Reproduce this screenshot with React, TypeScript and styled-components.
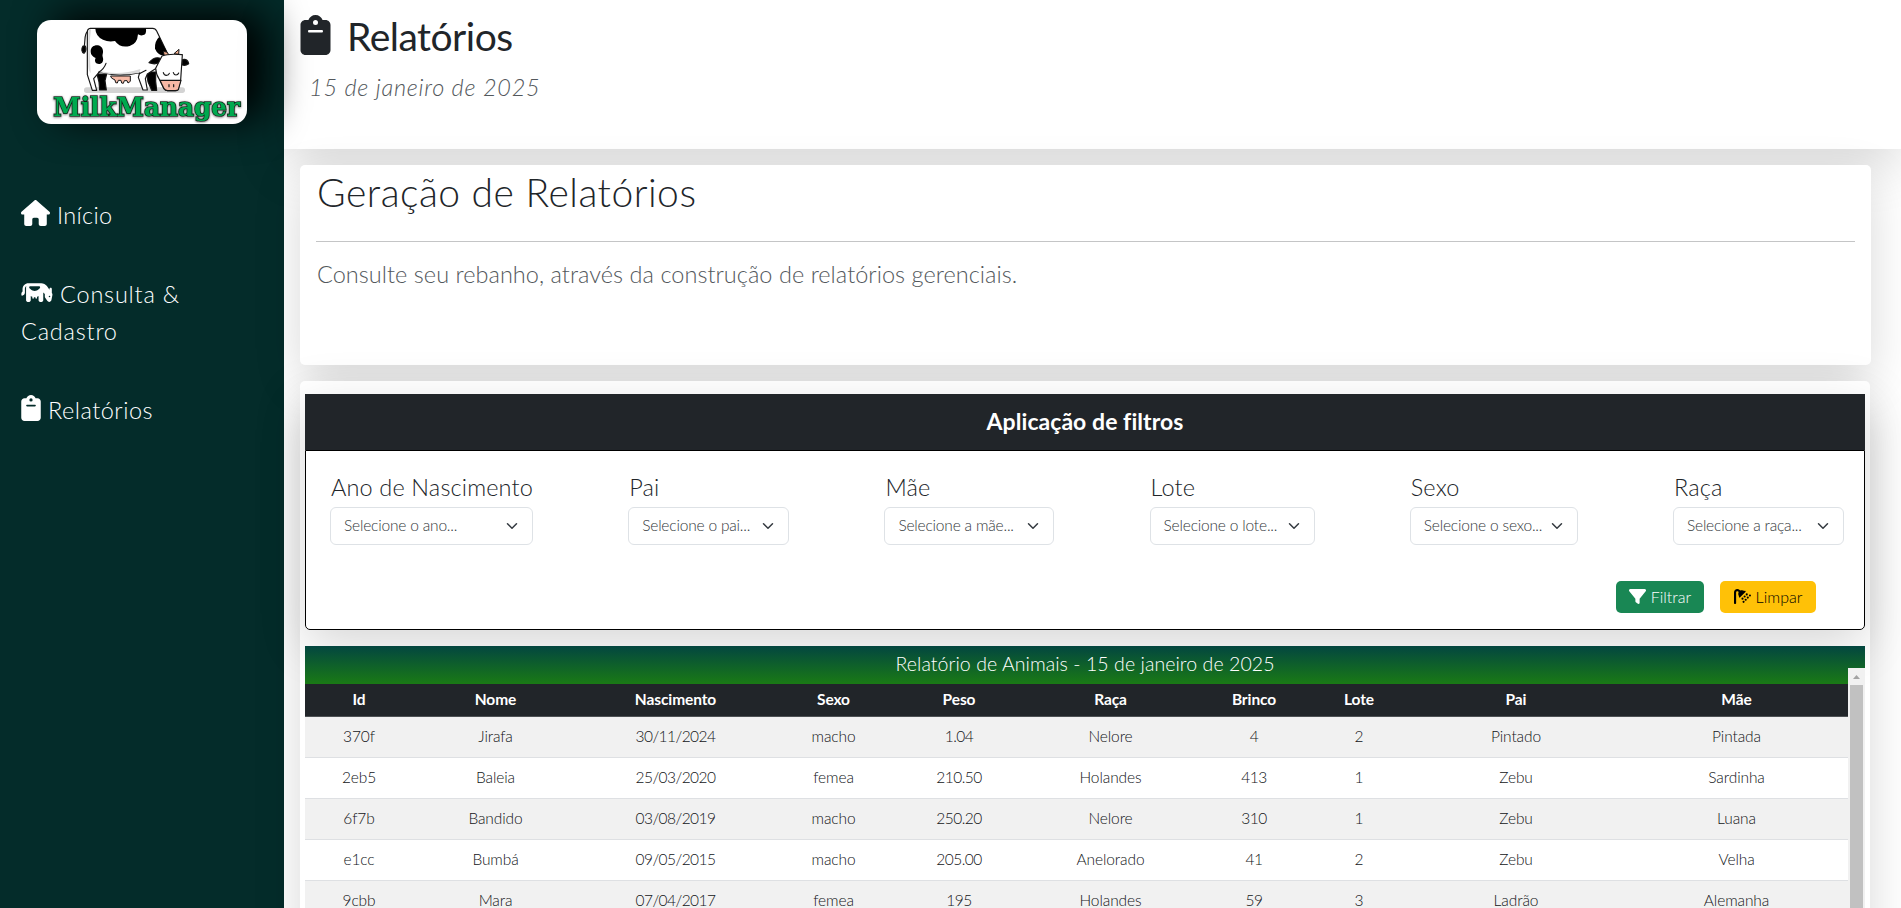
import React from "react";
import styled, { createGlobalStyle } from "styled-components";
import { FaHouse, FaCow, FaClipboard, FaFilter, FaShower } from "react-icons/fa6";

const Global = createGlobalStyle`
  *, *::before, *::after { box-sizing: border-box; }
  html, body { margin: 0; background: #fff; overflow: hidden; }
  body { font-family: Lato, "Open Sans", sans-serif; font-weight: 300; color: #212529; font-size: 16px; line-height: 24px; }
  h1, h2, p { margin: 0; font-weight: 300; }
`;

const SHADOW = "0 16px 48px rgba(0, 0, 0, 0.155)";

const Page = styled.div`
  display: flex;
  height: 908px;
  overflow: hidden;
`;
const Sidebar = styled.aside`
  display: flow-root;
  flex: 0 0 284px;
  background: #042c2a;
  color: #fff;
`;
const LogoBox = styled.div`
  width: 210px;
  height: 104px;
  margin: 20px 0 0 37px;
  border-radius: 14px;
  background: #fff;
  box-shadow: 18px -6px 40px #000;
  svg { display: block; }
`;
const Nav = styled.nav`
  display: flex;
  flex-direction: column;
  gap: 41px;
  padding: 73px 21px 0;
`;
const NavLink = styled.a<{ $ls: number; $icon: number }>`
  font-size: 23.5px;
  line-height: 37.5px;
  letter-spacing: ${(p) => p.$ls}px;
  svg { width: ${(p) => p.$icon}px; vertical-align: -2px; margin-right: 7px; }
`;
const Main = styled.main`
  flex: 1;
  min-width: 0;
`;
const Header = styled.header`
  height: 149px;
  padding: 15px 16px 0;
  box-shadow: ${SHADOW};
`;
const Heading = styled.h1`
  display: flex;
  align-items: center;
  gap: 16px;
  height: 42px;
  font-size: 39px;
  font-weight: 400;
  letter-spacing: -0.5px;
  svg { width: 31px; margin-top: -2px; }
`;
const DateLine = styled.p`
  margin: 14px 0 0 9px;
  font-size: 23.5px;
  line-height: 32px;
  font-style: italic;
  letter-spacing: 0.75px;
  color: #53585c;
`;
const Cards = styled.div`
  display: flex;
  flex-direction: column;
  gap: 16px;
  padding: 16px 31px 0 16px;
`;
const Intro = styled.section`
  height: 200px;
  margin-right: -1px;
  padding: 4px 16px 0 16px;
  border-radius: 5px;
  background: #fff;
  box-shadow: ${SHADOW};
`;
const IntroTitle = styled.h2`
  padding-left: 1px;
  font-size: 39px;
  line-height: 46px;
  letter-spacing: 0.5px;
`;
const Rule = styled.hr`
  margin: 26px 0 0;
  border: 0;
  border-top: 1px solid #c4c5c6;
`;
const IntroText = styled.p`
  margin-top: 16px;
  padding-left: 1px;
  font-size: 23.5px;
  line-height: 32px;
  letter-spacing: 0.04px;
  color: #53585c;
`;
const Report = styled.section`
  height: 640px;
  padding: 13px 5px 0;
  border-radius: 5px;
  background: #fff;
  box-shadow: ${SHADOW};
`;
const FilterPanel = styled.div`
  height: 236px;
  border-radius: 0 0 5px 5px;
  box-shadow: ${SHADOW};
`;
const FilterTitle = styled.div`
  height: 56px;
  background: #212529;
  color: #fff;
  font-size: 23px;
  font-weight: 700;
  line-height: 54px;
  text-align: center;
  letter-spacing: 0.05px;
`;
const FilterBody = styled.div`
  height: 180px;
  padding: 17px 20px 0 24px;
  border: 1px solid #000;
  border-radius: 0 0 5px 5px;
  background: #fff;
`;
const Fields = styled.div`
  display: flex;
  justify-content: space-between;
`;
const Field = styled.label<{ $w: number }>`
  display: block;
  width: ${(p) => p.$w}px;
  font-size: 23.5px;
  line-height: 38px;
  letter-spacing: 0.15px;
  text-indent: 1px;
  white-space: nowrap;
`;
const SelectBox = styled.div`
  display: flex;
  align-items: center;
  justify-content: space-between;
  height: 38px;
  margin-top: 1px;
  padding: 0 14px 2px 12px;
  border: 1px solid #dee2e6;
  border-radius: 6px;
  font-size: 15.5px;
  line-height: 24px;
  letter-spacing: -0.18px;
  color: #33373b;
  svg { position: relative; top: 1px; }
`;
const Actions = styled.div`
  display: flex;
  justify-content: flex-end;
  gap: 16px;
  margin-top: 36px;
  padding-right: 28px;
`;
const Button = styled.button<{ $bg: string; $fg: string; $w: number }>`
  display: flex;
  align-items: center;
  justify-content: center;
  gap: 5px;
  width: ${(p) => p.$w}px;
  height: 32px;
  padding: 0 0 1px;
  border: 0;
  border-radius: 5px;
  background: ${(p) => p.$bg};
  color: ${(p) => p.$fg};
  font: 300 16px Lato, sans-serif;
  letter-spacing: 0;
`;
const Listing = styled.div`
  display: grid;
  grid-template-columns: 1543px 17px;
  grid-template-rows: 38px 1fr;
  height: 360px;
  margin-top: 16px;
`;
const Caption = styled.div`
  grid-column: 1 / 3;
  background: linear-gradient(#034640, #1a7a15);
  color: #fff;
  font-size: 19.5px;
  line-height: 35px;
  text-align: center;
  letter-spacing: 0.07px;
`;
const Table = styled.table`
  align-self: start;
  width: 1543px;
  table-layout: fixed;
  border-collapse: separate;
  border-spacing: 0;
  text-align: center;
  font-size: 15.5px;
`;
const Th = styled.th<{ $w: number }>`
  width: ${(p) => p.$w}px;
  height: 33px;
  padding: 0 0 3px;
  background: #212529;
  border-bottom: 1px solid #4d5154;
  color: #fff;
  font-weight: 700;
  letter-spacing: -0.1px;
`;
const Row = styled.tr`
  &:nth-child(odd) { background: #f1f1f1; }
`;
const Td = styled.td<{ $tight: boolean }>`
  height: 41px;
  padding: 0 0 2px;
  border-bottom: 1px solid #dee0e3;
  color: #111417;
  letter-spacing: ${(p) => (p.$tight ? -0.55 : -0.1)}px;
`;
const ScrollTrack = styled.div`
  margin-top: -16px;
  padding: 6px 2px 0;
  background: #f1f1f1;
`;
const ScrollArrow = styled.svg`
  display: block;
  width: 13px;
  height: 11px;
`;
const Thumb = styled.div`
  height: 300px;
  background: #c1c1c1;
`;

const columns: [string, number][] = [
  ["Id", 108], ["Nome", 165], ["Nascimento", 195], ["Sexo", 121], ["Peso", 130],
  ["Raça", 173], ["Brinco", 114], ["Lote", 96], ["Pai", 218], ["Mãe", 223],
];
const animals = [
  ["370f", "Jirafa", "30/11/2024", "macho", "1.04", "Nelore", "4", "2", "Pintado", "Pintada"],
  ["2eb5", "Baleia", "25/03/2020", "femea", "210.50", "Holandes", "413", "1", "Zebu", "Sardinha"],
  ["6f7b", "Bandido", "03/08/2019", "macho", "250.20", "Nelore", "310", "1", "Zebu", "Luana"],
  ["e1cc", "Bumbá", "09/05/2015", "macho", "205.00", "Anelorado", "41", "2", "Zebu", "Velha"],
  ["9cbb", "Mara", "07/04/2017", "femea", "195", "Holandes", "59", "3", "Ladrão", "Alemanha"],
];
const NUMERIC = [2, 4, 6];
const filters: [string, string, number][] = [
  ["Ano de Nascimento", "Selecione o ano...", 203],
  ["Pai", "Selecione o pai...", 161],
  ["Mãe", "Selecione a mãe...", 170],
  ["Lote", "Selecione o lote...", 165],
  ["Sexo", "Selecione o sexo...", 168],
  ["Raça", "Selecione a raça...", 171],
];

const Chevron = () => (
  <svg width="12" height="12" viewBox="0 0 16 16" fill="none" stroke="#343a40" strokeWidth="2" strokeLinecap="round" strokeLinejoin="round">
    <path d="m2 5 6 6 6-6" />
  </svg>
);

const Logo = () => (
  <svg width="210" height="104" viewBox="111 60 630 312">
    <defs>
      <filter id="soft" x="-5%" y="-20%" width="110%" height="150%">
        <feDropShadow dx="0" dy="2" stdDeviation="3" floodColor="#777" />
      </filter>
    </defs>
    <rect x="252" y="262" width="303" height="17" rx="8" fill="#d3d3d3" />
    <g stroke="#161616" strokeWidth="3.5" strokeLinejoin="round" strokeLinecap="round">
      <path d="M263 94C250 104 258 128 251 145" fill="none" />
      <path d="M249 138c-6 9-4 18 3 22 7-7 7-15 4-22z" fill="#000" />
      <path d="M291 222h29l-5 20 4 28h-20l-2-24z" fill="#000" />
      <path d="M439 216h28l0 28 3 27h-15l-11-26z" fill="#000" />
      <path d="M333 228h58v16l-7 5-3-7h-8l-3 8-5-1-2-8h-8l-3 8-5-1-2-8-9-5z" fill="#f6b9a5" strokeWidth="3" />
      <path d="M271 85H458Q466 85 470 93L505 166 470 204 442 222 436 236 442 270H429L415 232 419 218Q356 232 298 216L281 236 290 271H277L262 224V96Q262 86 271 85z" fill="#fff" />
    </g>
    <path d="M300 213Q358 228 421 207L419 218Q356 230 298 217zM265 98q0-9 8-11-5 35-4 65l3 68q-7-10-7-20z" fill="#d9d9d9" />
    <path d="M318 190Q312 207 296 217M438 211l-20 10" fill="none" stroke="#161616" strokeWidth="3.5" strokeLinecap="round" />
    <path d="M286 86H438q2 17-8 19-8 3-16-2-2 29-25 35-29 7-44-15-20 4-36-4-22-10-23-33zM272 154c0-24 36-24 37-1 1 7-3 11-1 17 5 14-3 22-11 22-10 0-15-9-10-18-8-3-15-9-15-20zM478 110q10 23 22 43l-9 13q-18-1-26-20-2-22 13-36z" fill="#000" />
    <g stroke="#161616" strokeWidth="3.5" strokeLinejoin="round">
      <path d="M548 179q15-4 18 12-11 8-20 3z" fill="#000" />
      <path d="M484 176q-20-9-37 12 21 8 33-3z" fill="#000" />
      <path d="M490 154l12 3 6 12-15-1zM537 148l-15 13 14 2z" fill="#f6b090" strokeWidth="3" />
      <path d="M486 168q20-8 61-4l-5 76-8 29q-3 3-8 3h-23q-7 0-11-6l-14-28q-10-14-11-33z" fill="#fff" />
      <path d="M480 241h63l-8 28q-3 3-9 3h-23q-7 0-11-6z" fill="#f8b8a5" />
      <path d="M490 218q2 8 9 8t9-6M520 218q2 7 8 7t8-6M507 254v6M521 254v6" fill="none" strokeLinecap="round" />
    </g>
    <text x="160" y="347" textLength="560" lengthAdjust="spacingAndGlyphs" fontFamily="DejaVu Serif, serif" fontWeight="700" fontSize="76" fill="#00a94f" stroke="#10251a" strokeWidth="5" paintOrder="stroke" filter="url(#soft)">MilkManager</text>
  </svg>
);

export default function App() {
  return (
    <Page>
      <Global />
      <Sidebar>
        <LogoBox><Logo /></LogoBox>
        <Nav>
          <NavLink $ls={0.3} $icon={29}><FaHouse size={26} />Início</NavLink>
          <NavLink $ls={0.8} $icon={32}><FaCow size={25} />Consulta &amp; Cadastro</NavLink>
          <NavLink $ls={0.5} $icon={20}><FaClipboard size={26} />Relatórios</NavLink>
        </Nav>
      </Sidebar>
      <Main>
        <Header>
          <Heading><FaClipboard size={40} />Relatórios</Heading>
          <DateLine>15 de janeiro de 2025</DateLine>
        </Header>
        <Cards>
          <Intro>
            <IntroTitle>Geração de Relatórios</IntroTitle>
            <Rule />
            <IntroText>Consulte seu rebanho, através da construção de relatórios gerenciais.</IntroText>
          </Intro>
          <Report>
            <FilterPanel>
              <FilterTitle>Aplicação de filtros</FilterTitle>
              <FilterBody>
                <Fields>
                  {filters.map(([label, hint, w]) => (
                    <Field key={label} $w={w}>
                      {label}
                      <SelectBox>{hint}<Chevron /></SelectBox>
                    </Field>
                  ))}
                </Fields>
                <Actions>
                  <Button $bg="#198754" $fg="#fff" $w={88}><FaFilter size={17} />Filtrar</Button>
                  <Button $bg="#ffc107" $fg="#000" $w={96}><FaShower size={17} />Limpar</Button>
                </Actions>
              </FilterBody>
            </FilterPanel>
            <Listing>
              <Caption>Relatório de Animais - 15 de janeiro de 2025</Caption>
              <Table>
                <thead>
                  <tr>{columns.map(([name, w]) => <Th key={name} $w={w}>{name}</Th>)}</tr>
                </thead>
                <tbody>
                  {animals.map((a) => (
                    <Row key={a[0]}>{a.map((v, i) => <Td key={i} $tight={NUMERIC.includes(i)}>{v}</Td>)}</Row>
                  ))}
                </tbody>
              </Table>
              <ScrollTrack>
                <ScrollArrow viewBox="0 0 13 11"><path d="M3 5 6.500 1 10 5z" fill="#a3a3a3" /></ScrollArrow>
                <Thumb />
              </ScrollTrack>
            </Listing>
          </Report>
        </Cards>
      </Main>
    </Page>
  );
}
